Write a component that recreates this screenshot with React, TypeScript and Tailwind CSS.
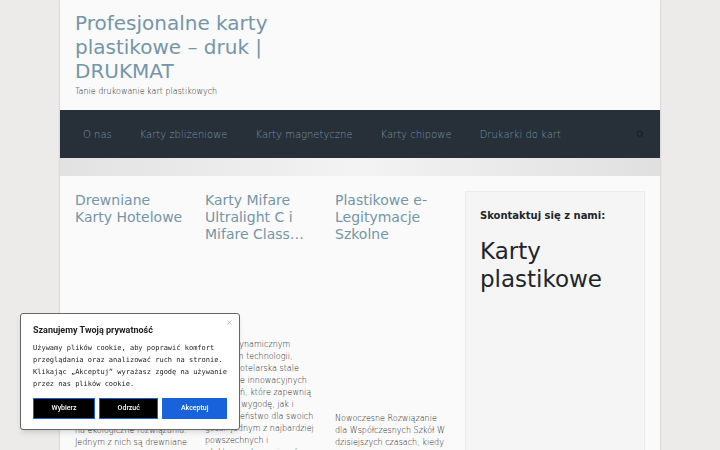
import { Search, X } from "lucide-react";

const menu = ["O nas", "Karty zbliżeniowe", "Karty magnetyczne", "Karty chipowe", "Drukarki do kart"];

const posts = [
    {
        title: "Drewniane Karty Hotelowe",
        thumb: "h-[163px]",
        text: "W branży hotelarskiej coraz częściej stawia się na\u00a0ekologiczne rozwiązania. Jednym z nich są drewniane karty hotelowe.",
    },
    {
        title: "Karty Mifare Ultralight C i Mifare Class…",
        thumb: "h-[84px]",
        text: "Wraz z dynamicznym rozwojem technologii, branża hotelarska stale poszukuje innowacyjnych rozwiązań, które zapewnią zarówno wygodę, jak i bezpieczeństwo dla swoich gości. Jednym z najbardziej powszechnych i efektywnych rozwiązań są karty Mifare.",
    },
    {
        title: "Plastikowe e-Legitymacje Szkolne",
        thumb: "h-[158px]",
        text: "Nowoczesne Rozwiązanie dla Współczesnych Szkół W dzisiejszych czasach, kiedy technologia jest wszędzie.",
    },
];

const Header = () => (
    <header className="px-[15px] pt-[11px] pb-[11px]">
        <h1 className="w-[210px] text-[20px] leading-6 text-[#7496a8]">
            <a href="#">Profesjonalne karty plastikowe – druk | DRUKMAT</a>
        </h1>
        <p className="mt-0.5 text-[8px] leading-[14px] font-extralight text-[#222]">Tanie drukowanie kart plastikowych</p>
    </header>
);

const Navigation = () => (
    <nav className="flex h-12 items-center justify-between bg-[#272f38] pr-4 pl-[23px]">
        <ul className="flex gap-7 text-[10px] font-extralight text-[#7496a8]">
            {menu.map((item) => (
                <li key={item}>
                    <a href="#">{item}</a>
                </li>
            ))}
        </ul>
        <button aria-label="Szukaj" className="text-[#161c22]">
            <Search className="size-2" strokeWidth={3} />
        </button>
    </nav>
);

const CookieBanner = () => (
    <section
        aria-label="Szanujemy Twoją prywatność"
        className="fixed bottom-5 left-5 w-[220px] rounded-[3px] border border-[#666] bg-white px-3 pt-2.5 pb-2.5 shadow-md"
    >
        <button aria-label="Zamknij" className="absolute top-[5px] right-[6px] text-[#888]">
            <X className="size-[7px]" />
        </button>
        <h2 className="font-[Roboto,sans-serif] text-[9px] leading-3 font-bold text-[#212121]">
            Szanujemy Twoją prywatność
        </h2>
        <p className="mt-1.5 font-['DejaVu_Sans_Mono',monospace] text-[7px] leading-3 text-[#212121]">
            Używamy plików cookie, aby poprawić komfort przeglądania oraz analizować ruch na stronie. Klikając „Akceptuj” wyrażasz zgodę na używanie przez nas plików cookie.
        </p>
        <div className="mt-2 flex gap-1 font-[Roboto,sans-serif] text-[7px] leading-[19px] font-medium text-white">
            <button className="grow border border-[#1863dc] bg-black">Wybierz</button>
            <button className="grow border border-[#1863dc] bg-black">Odrzuć</button>
            <button className="grow border border-[#1863dc] bg-[#1863dc]">Akceptuj</button>
        </div>
    </section>
);

const App = () => {
    return (
        <div className="h-screen overflow-hidden bg-[#ecebe9] font-['DejaVu_Sans',sans-serif]">
            <div className="mx-[60px] min-h-full bg-[#fafafa] shadow-[0_0_2px_#bbb]">
                <Header />
                <Navigation />
                <div className="h-[18px] bg-linear-to-r from-[#e2e2e2] via-[#f3f3f3] to-[#e0e0e0]" />

                <div className="flex gap-[15px] p-[15px]">
                    <main className="grid flex-1 grid-cols-3 gap-[15px] pt-px">
                        {posts.map((post) => (
                            <article key={post.title}>
                                <h2 className="text-[14px] leading-[17px] text-[#7496a8]">
                                    <a href="#">{post.title}</a>
                                </h2>
                                <div className={post.thumb} />
                                <p className="mt-3 text-[8px] leading-3 font-extralight text-[#222]">{post.text}</p>
                            </article>
                        ))}
                    </main>

                    <aside className="w-[180px] border border-[#ececec] bg-[#f5f5f5] px-3.5 pt-4">
                        <h3 className="text-[10px] leading-4 font-bold text-[#212529]">Skontaktuj się z nami:</h3>
                        <h2 className="mt-[13px] text-[23px] leading-7 text-[#212529]">Karty plastikowe</h2>
                    </aside>
                </div>
            </div>
            <CookieBanner />
        </div>
    );
};

export default App;
